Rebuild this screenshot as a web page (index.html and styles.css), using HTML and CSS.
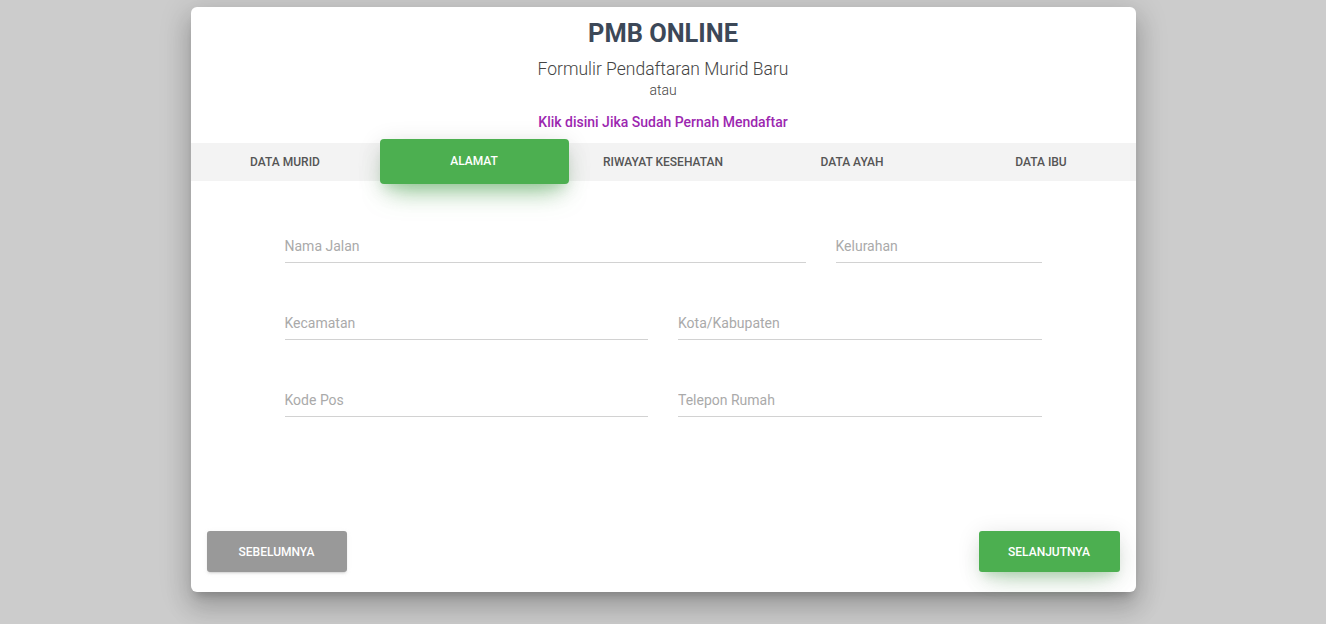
FILE: index.html
```html
<!DOCTYPE html>
<html lang="id">
<head>
  <meta charset="UTF-8" />
  <meta name="viewport" content="width=device-width, initial-scale=1.0" />
  <title>PMB Online</title>
  <link rel="stylesheet" href="styles.css">
</head>
<body>
  <div class="wizard-card">
    <div class="wizard-header">
      <h3 class="title">PMB ONLINE</h3>
      <h5 class="subtitle">Formulir Pendaftaran Murid Baru</h5>
      <div class="atau">atau</div>
      <a class="link-daftar" href="#">Klik disini Jika Sudah Pernah Mendaftar</a>
    </div>

    <ul class="tabs">
      <li>Data Murid</li>
      <li class="active">Alamat</li>
      <li>Riwayat Kesehatan</li>
      <li>Data Ayah</li>
      <li>Data Ibu</li>
    </ul>

    <div class="form-content">
      <div class="row row-wide">
        <input type="text" placeholder="Nama Jalan" />
        <input type="text" placeholder="Kelurahan" />
      </div>
      <div class="row">
        <input type="text" placeholder="Kecamatan" />
        <input type="text" placeholder="Kota/Kabupaten" />
      </div>
      <div class="row">
        <input type="text" placeholder="Kode Pos" />
        <input type="text" placeholder="Telepon Rumah" />
      </div>
    </div>

    <div class="wizard-footer">
      <button class="btn btn-prev">Sebelumnya</button>
      <button class="btn btn-next">Selanjutnya</button>
    </div>
  </div>
</body>
</html>
```

FILE: styles.css
```css
html {
  background: #cccccc;
}
body {
  font-family: Roboto, 'Liberation Sans', sans-serif;
  margin: 0;
  padding: 7px 0 40px;
  min-height: 624px;
  box-sizing: border-box;
  background: #cccccc;
  color: #3c4858;
}
.wizard-card {
  width: 945px;
  margin: 0 auto;
  background: #fff;
  border-radius: 6px;
  box-shadow: 0 16px 24px 2px rgba(0,0,0,.14), 0 6px 30px 5px rgba(0,0,0,.12), 0 8px 10px -5px rgba(0,0,0,.2);
}
.wizard-header {
  text-align: center;
  padding-top: 11px;
}
.title {
  margin: 0;
  font-size: 25.4px;
  line-height: 30px;
  font-weight: 700;
  color: #3c4858;
}
.subtitle {
  margin: 9px 0 0;
  font-size: 17.5px;
  line-height: 24px;
  font-weight: 300;
  color: #444;
}
.atau {
  font-size: 14px;
  line-height: 18px;
  font-weight: 300;
  color: #444;
}
.link-daftar {
  display: inline-block;
  margin-top: 14px;
  font-size: 14px;
  line-height: 18px;
  font-weight: 500;
  color: #9c27b0;
  text-decoration: none;
}
.tabs {
  display: flex;
  list-style: none;
  margin: 12px 0 0;
  padding: 0;
  height: 38px;
  background: #f3f3f3;
}
.tabs li {
  flex: 1;
  text-align: center;
  font-size: 12px;
  font-weight: 500;
  line-height: 38px;
  text-transform: uppercase;
  color: #555;
}
.tabs li.active {
  margin: -4px 0 -3px;
  line-height: 45px;
  height: 45px;
  background: #4caf50;
  color: #fff;
  border-radius: 4px;
  box-shadow: 0 16px 26px -10px rgba(76,175,80,.56), 0 4px 25px 0 rgba(0,0,0,.12), 0 8px 10px -5px rgba(76,175,80,.2);
  position: relative;
}
.form-content {
  margin: 0 94px;
  padding-top: 47px;
  display: flex;
  flex-direction: column;
  gap: 42px;
}
.row {
  display: grid;
  grid-template-columns: 1fr 1fr;
  column-gap: 30px;
}
.row-wide {
  grid-template-columns: 521px 206px;
}
input[type="text"] {
  height: 35px;
  box-sizing: border-box;
  border: none;
  border-bottom: 1px solid #d2d2d2;
  padding: 2px 0 0;
  font-family: Roboto, 'Liberation Sans', sans-serif;
  font-size: 14px;
  color: #555;
  background: transparent;
  outline: none;
}
input::placeholder {
  color: #aaa;
}
.wizard-footer {
  display: flex;
  justify-content: space-between;
  margin-top: 114px;
  padding: 0 16px 20px;
}
.btn {
  height: 41px;
  border: none;
  border-radius: 3px;
  font-family: Roboto, 'Liberation Sans', sans-serif;
  font-size: 12px;
  font-weight: 500;
  text-transform: uppercase;
  color: #fff;
  cursor: pointer;
}
.btn-prev {
  width: 140px;
  background: #999;
  box-shadow: 0 2px 2px 0 rgba(153,153,153,.14), 0 3px 1px -2px rgba(153,153,153,.2), 0 1px 5px 0 rgba(153,153,153,.12);
}
.btn-next {
  width: 141px;
  background: #4caf50;
  box-shadow: 0 14px 26px -12px rgba(76,175,80,.42), 0 4px 23px 0 rgba(0,0,0,.12), 0 8px 10px -5px rgba(76,175,80,.2);
}
```
